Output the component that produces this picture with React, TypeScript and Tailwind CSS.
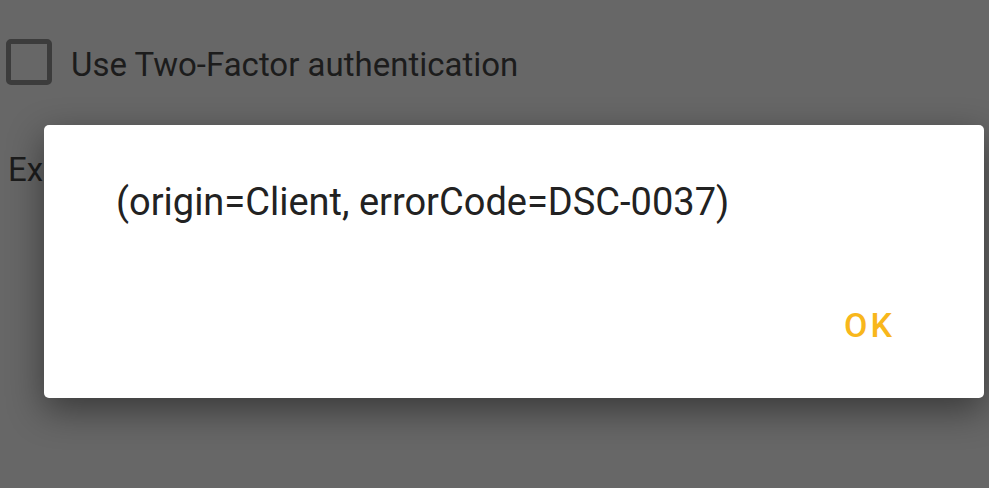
import React from 'react';

export default function App() {
  return (
    <div className="relative w-[989px] h-[488px] overflow-hidden bg-[#676767] font-['Roboto',sans-serif]">
      {/* Underlying screen content (dimmed) */}
      <div className="flex items-center gap-[19px] pl-[6px] pt-[39px]">
        <div className="w-[46px] h-[46px] rounded-[5px] border-[5px] border-[#3c3c3c]" />
        <span className="text-[33px] text-[#1c1c1c] leading-none pt-[4px]">Use Two-Factor authentication</span>
      </div>
      <div className="pl-[8px] pt-[68px] text-[33px] text-[#1c1c1c] leading-none">Export settings</div>

      {/* Dialog */}
      <div className="absolute left-[44px] top-[125px] w-[940px] h-[273px] bg-white rounded-[5px] shadow-[0_12px_36px_rgba(0,0,0,0.45)] flex flex-col">
        <p className="pl-[72px] pt-[58px] text-[38px] text-[#222222] leading-none">
          (origin=Client, errorCode=DSC-0037)
        </p>
        <div className="mt-auto flex justify-end pr-[89px] pb-[56px]">
          <button type="button" className="text-[34px] font-medium text-[#f8b71c] tracking-[3px] leading-none">
            OK
          </button>
        </div>
      </div>
    </div>
  );
}
